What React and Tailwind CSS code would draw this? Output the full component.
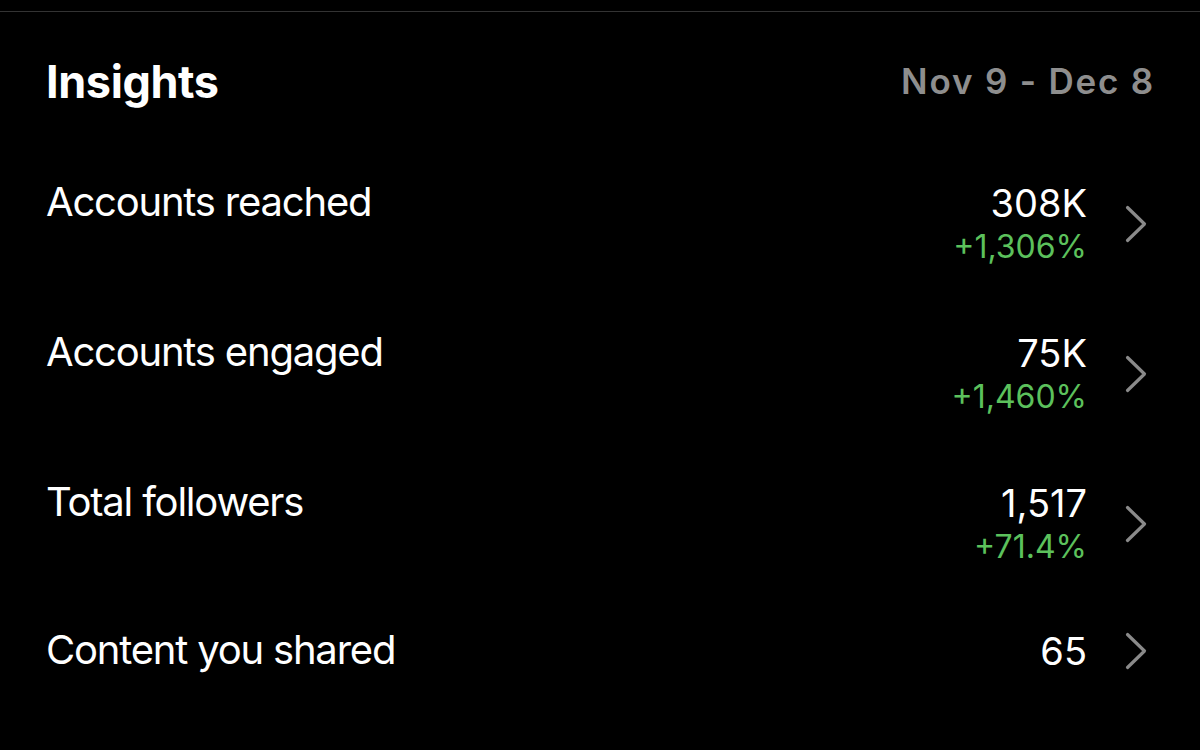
import React from "react";

function Chevron() {
  return (
    <svg width="22" height="38" viewBox="0 0 22 38" fill="none" className="ml-[38px] mr-[6px] shrink-0">
      <path d="M2.5 2.5 L19.5 19 L2.5 35.5" stroke="#8a8a8a" strokeWidth="3.2" strokeLinecap="round" strokeLinejoin="round" />
    </svg>
  );
}

function Row({ label, value, delta, h }) {
  return (
    <div className={`flex items-start justify-between pl-[46px] ${h}`}>
      <div className="text-[40px] leading-[48px] text-white font-normal tracking-[-1.2px]">{label}</div>
      <div className="flex items-center mt-[3px]">
        <div className="flex flex-col items-end">
          <div className="text-[38px] leading-[44px] text-white">{value}</div>
          {delta && <div className="text-[32px] leading-[40px] text-[#5cc15c] mt-[2px]">{delta}</div>}
        </div>
        <Chevron />
      </div>
    </div>
  );
}

export default function App() {
  return (
    <div className="w-[1200px] h-[750px] bg-black overflow-hidden font-['Inter','Liberation_Sans',sans-serif]">
      <div className="h-[11px]" />
      <div className="h-px bg-[#333333]" />
      <div className="flex justify-between items-start pl-[46px] pr-[47px] mt-[43px]">
        <div className="text-[45px] leading-[54px] font-bold text-white tracking-[-0.4px]">Insights</div>
        <div className="text-[35px] leading-[40px] font-semibold text-[#8e8e8e] mt-[6px] tracking-[1.8px] mr-[-2px]">Nov 9 - Dec 8</div>
      </div>
      <div className="mt-[69px] pr-[47px]">
        <Row label="Accounts reached" value="308K" delta="+1,306%" h="h-[150px]" />
        <Row label="Accounts engaged" value="75K" delta="+1,460%" h="h-[150px]" />
        <Row label="Total followers" value="1,517" delta="+71.4%" h="h-[148px]" />
        <Row label="Content you shared" value="65" h="h-[100px]" />
      </div>
    </div>
  );
}
